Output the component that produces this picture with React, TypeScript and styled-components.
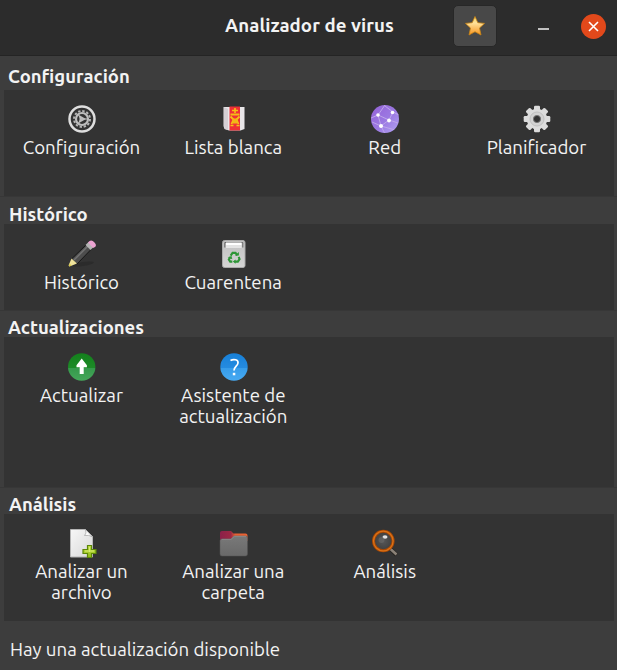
import React from "react";
import styled, { createGlobalStyle } from "styled-components";

const GlobalStyle = createGlobalStyle`
  * { box-sizing: border-box; }
  body { margin: 0; background: #3d3d3d; font-family: "Ubuntu", "Noto Sans", sans-serif; color: #f3f3f3; }
  svg { display: block; overflow: visible; }
`;

const Window = styled.div`
  width: 617px;
  height: 670px;
  display: flex;
  flex-direction: column;
  background: #3d3d3d;
  overflow: hidden;
`;

const TitleBar = styled.header`
  height: 56px;
  flex: none;
  display: flex;
  justify-content: space-between;
  align-items: center;
  padding: 0 11px 3px 225px;
  background: #2c2c2c;
  border-bottom: 1px solid #242424;
`;

const WindowTitle = styled.h1`
  margin: 0;
  font-size: 18.67px;
  line-height: 24px;
  font-weight: 700;
  letter-spacing: 0.08px;
  white-space: nowrap;
`;

const Controls = styled.div`
  display: flex;
  align-items: center;
`;

const StarButton = styled.button`
  width: 44px;
  height: 42px;
  padding: 0;
  display: grid;
  place-items: center;
  border: 1px solid #272727;
  border-radius: 5px;
  background: #484848;
`;

const MinimizeButton = styled.button`
  width: 11px;
  height: 20px;
  margin: 0 32px 0 41px;
  padding: 6px 0 0;
  border: 0;
  background: none;
`;

const CloseButton = styled.button`
  width: 25px;
  height: 25px;
  padding: 0;
  border: 0;
  border-radius: 50%;
  background: #e2491b;
  display: grid;
  place-items: center;
`;

const Group = styled.section<{ $height: number; $ruled: boolean }>`
  height: ${(p) => p.$height}px;
  flex: none;
  display: flex;
  flex-direction: column;
  padding: 0 3px 0 4px;
  border-top: 1px solid ${(p) => (p.$ruled ? "#373737" : "#3d3d3d")};
`;

const GroupTitle = styled.h2<{ $height: number; $bottom: number; $indent: number }>`
  margin: 0;
  height: ${(p) => p.$height}px;
  flex: none;
  padding: 0 0 ${(p) => p.$bottom}px ${(p) => p.$indent}px;
  display: flex;
  align-items: flex-end;
  font-size: 18.5px;
  line-height: 20px;
  font-weight: 700;
`;

const Panel = styled.div<{ $top: number }>`
  flex: 1;
  display: grid;
  grid-template-columns: 152px 151.5px 151.5px 152px;
  align-content: start;
  padding-top: ${(p) => p.$top}px;
  padding-left: 2px;
  background: #333333;
`;

const Item = styled.div`
  display: flex;
  flex-direction: column;
  align-items: center;
`;

const Label = styled.div`
  margin: 4px 1px 0 0;
  display: flex;
  flex-direction: column;
  align-items: center;
`;

const LabelLine = styled.span`
  font-size: 18.67px;
  line-height: 21px;
  white-space: nowrap;
`;

const Status = styled.footer`
  flex: 1;
  padding: 18px 0 0 10px;
  font-size: 18.67px;
  line-height: 22px;
`;

const Settings = () => (
  <svg width="28" height="28" viewBox="0 0 28 28" fill="none" stroke="#dedede">
    <circle cx="14" cy="14" r="12.5" strokeWidth="2.5" />
    <circle cx="14" cy="14" r="8" stroke="#b5b5b5" strokeWidth="2" strokeDasharray="2.4 1.789" />
    <circle cx="14" cy="14" r="6" stroke="#bdbdbd" strokeWidth="2.2" />
    <path d="M12.5 12v4l3.500-2Z" fill="#bdbdbd" stroke="#bdbdbd" strokeWidth="2" />
    <path d="M13 14L10 8.800M13 14l-3 5.200M15 14h6" stroke="#bdbdbd" strokeWidth="1.200" />
  </svg>
);

const Crest = () => (
  <svg width="28" height="28" viewBox="0 0 28 28">
    <path d="M3.500 2h21v22l-4 1.500H9L4.500 24l-1-3Z" fill="#e9e6e9" />
    <path d="M4 2v19l1 3 3 1V4Z" fill="#d5cfd4" />
    <path d="M9.500 1.500h10.500v24H9.500Z" fill="#ef3036" />
    <path d="M12 5.500h6M15 3v5" stroke="#f5c315" strokeWidth="1.600" />
    <path d="M10.500 8.500h9v2h-9Z" fill="#f5bd16" />
    <path d="M10.500 11.500l3 3-2 4.500M19.500 11.500l-3 3 2 4.500" fill="none" stroke="#f5c315" strokeWidth="1.800" />
    <path d="M12.500 13.500h5v5h-5Z" fill="#f3b717" />
    <path d="M10.500 20.500h3m3 0h3" stroke="#f5c315" strokeWidth="1.600" />
  </svg>
);

const Network = () => (
  <svg width="28" height="28" viewBox="0 0 28 28">
    <defs>
      <linearGradient id="net" x1="0" y1="0" x2="1" y2="1">
        <stop stopColor="#9461d7" /><stop offset=".55" stopColor="#9c7ae3" /><stop offset="1" stopColor="#b2a4f2" />
      </linearGradient>
      <clipPath id="netClip"><circle cx="14" cy="14" r="14" /></clipPath>
    </defs>
    <circle cx="14" cy="14" r="14" fill="url(#net)" />
    <g clipPath="url(#netClip)">
      <path d="M0 13l7-3 7-10m-7 10l11 5 4-8 6 3M22 7L14 1M18 15l-8 6-9-4m9 4l4 8m-4-8L7 10m11 5l9 3M10 21l14 4" fill="none" stroke="#bda6ea" strokeWidth="1" />
    </g>
    <g fill="#fff"><circle cx="7" cy="10" r="1.800" /><circle cx="21.500" cy="7.500" r="1.800" /><circle cx="18" cy="15.500" r="1.900" /><circle cx="10" cy="21" r="2" /></g>
  </svg>
);

const Gear = () => (
  <svg width="28" height="28" viewBox="0 0 28 28">
    <g fill="#dcdcdc">
      {[0, 45, 90, 135].map((a) => (
        <rect key={a} x="11" y="0.700" width="6" height="26.600" rx="1.200" transform={`rotate(${a} 14 14)`} />
      ))}
      <circle cx="14" cy="14" r="10.300" />
    </g>
    <circle cx="14" cy="14" r="7" fill="#d2d2d2" stroke="#c0c0c0" strokeWidth="1" />
    <circle cx="14" cy="14" r="3.600" fill="#333" stroke="#777" />
  </svg>
);

const Pencil = () => (
  <svg width="28" height="28" viewBox="0 0 28 28">
    <ellipse cx="15" cy="24" rx="11" ry="2" fill="#2b2b2b" transform="rotate(-8 15 24)" />
    <path d="M3.500 19L18 5l5 4.500L9 24Z" fill="#4d4d4d" stroke="#171717" />
    <path d="M6 20L20 6" stroke="#737373" strokeWidth="1.500" />
    <path d="M17.500 5l3-3 5 5-3 3Z" fill="#b5b5b5" />
    <path d="M20 2.500q3-4 6.500 0t-1.500 5.500Z" fill="#eba3d1" />
    <path d="M3.500 18.500l5.500 5-7.500 3-1-1Z" fill="#eee29b" /><path d="M1.500 23.500l2 2-2.500 1Z" fill="#d9c83d" />
  </svg>
);

const Bin = () => (
  <svg width="28" height="28" viewBox="0 0 28 28">
    <defs><linearGradient id="bin" x1="0" y1="0" x2="0" y2="1"><stop stopColor="#bfbfbf" /><stop offset="1" stopColor="#d5d5d5" /></linearGradient></defs>
    <rect x="2.500" y=".5" width="22.500" height="27" rx="2" fill="url(#bin)" stroke="#aaa" />
    <path d="M4.800 7.500V2.500h18v5" fill="none" stroke="#666" strokeWidth="1" />
    <path d="M6 2.500h15.600v3H6Z" fill="#fff" /><path d="M6 5.500h15.600v2.500H6Z" fill="#e4e4e4" />
    <g fill="none" stroke="#2d9636" strokeWidth="2.500" transform="translate(1.700 2.900) scale(.85)">
      <path d="M10.500 15l2.300-3.200h3.500l2 3" />
      <path d="M20 16.500l1 2.500-2 3h-3.500" />
      <path d="M12.500 22H10l-1.600-2.500L10 17" />
      <path d="M15.500 14.800h4.700v-4Zm.8 4.600v5l-3.200-2.500ZM7 17l4.500-1.700 1 4Z" fill="#2d9636" stroke="none" />
    </g>
  </svg>
);

const Update = () => (
  <svg width="28" height="28" viewBox="0 0 28 28">
    <defs><linearGradient id="up" x1="0" y1="0" x2="0" y2="1"><stop stopColor="#14801c" /><stop offset=".53" stopColor="#1c8b27" /><stop offset=".54" stopColor="#35994b" /><stop offset="1" stopColor="#45a75a" /></linearGradient></defs>
    <circle cx="13.700" cy="14" r="13.700" fill="url(#up)" />
    <path d="M13.700 5.500l5.200 6.700v2h-3.200V21h-4v-6.800H8.500v-2Z" fill="#fff" />
  </svg>
);

const Help = () => (
  <svg width="28" height="28" viewBox="0 0 28 28">
    <defs><linearGradient id="help" x1="0" y1="0" x2="0" y2="1"><stop stopColor="#1780d8" /><stop offset=".53" stopColor="#258be0" /><stop offset=".54" stopColor="#369cea" /><stop offset="1" stopColor="#47aaf2" /></linearGradient></defs>
    <circle cx="14" cy="14" r="13.700" fill="url(#help)" />
    <path d="M10.500 7.500c3-1.800 8-1 7.500 2.500-.3 3-4 3.500-4 7.500" fill="none" stroke="#fff" strokeWidth="1.700" />
    <rect x="12.800" y="19.800" width="2.500" height="2.500" fill="#fff" />
  </svg>
);

const NewFile = () => (
  <svg width="28" height="28" viewBox="0 0 28 28">
    <defs>
      <linearGradient id="page" x1="0" y1="0" x2="1" y2="1"><stop stopColor="#f7f7f7" /><stop offset="1" stopColor="#d8d8d8" /></linearGradient>
      <linearGradient id="plus" x1="0" y1="0" x2="0" y2="1"><stop stopColor="#c3df48" /><stop offset="1" stopColor="#91be17" /></linearGradient>
    </defs>
    <path d="M2.500.5h15l7 7V28h-22Z" fill="url(#page)" stroke="#b5b5b5" />
    <path d="M17.500.5q1.500 4-1 6 4.500-1 8 1.500Z" fill="#fff" stroke="#aaa" strokeWidth=".8" />
    <path d="M19.500 16.500h4v4H28v4h-4.500v4h-4v-4H15v-4h4.500Z" fill="url(#plus)" stroke="#5c8708" strokeWidth="1.200" />
    <path d="M21.500 18v5M17 22h9" stroke="#d9ed77" strokeWidth="1" />
  </svg>
);

const Folder = () => (
  <svg width="28" height="28" viewBox="0 0 28 28">
    <defs>
      <linearGradient id="tab" x1="0" y1="0" x2="1" y2="0"><stop stopColor="#8b204a" /><stop offset=".4" stopColor="#9c2844" /><stop offset=".55" stopColor="#e66035" /><stop offset="1" stopColor="#ec6331" /></linearGradient>
      <linearGradient id="folder" x1="0" y1="0" x2="0" y2="1"><stop stopColor="#797979" /><stop offset="1" stopColor="#696969" /></linearGradient>
    </defs>
    <path d="M0 12V4q0-2 2-2h9l2.500 2.500h12q2 0 2 2V12Z" fill="url(#tab)" />
    <path d="M0 11.500q0-1.500 2-1.500h9l3-3h11.500q2 0 2 2v16q0 2-2 2H2q-2 0-2-2Z" fill="url(#folder)" stroke="#555" strokeWidth=".5" />
    <path d="M1.500 10.300H11L14.200 7.300h12" fill="none" stroke="#999" strokeWidth=".7" />
  </svg>
);

const Search = () => (
  <svg width="28" height="28" viewBox="0 0 28 28">
    <defs><radialGradient id="lens"><stop stopColor="#565656" /><stop offset="1" stopColor="#3e3e3e" /></radialGradient></defs>
    <path d="M19 19.500l6.500 6.500" stroke="#282522" strokeWidth="4" />
    <path d="M19.500 20l6 5.500" stroke="#8b8278" strokeWidth="2.500" />
    <circle cx="12.300" cy="12" r="9.800" fill="url(#lens)" stroke="#a84804" strokeWidth="3" />
    <circle cx="12.300" cy="12" r="9.800" fill="none" stroke="#da7218" strokeWidth="1.300" />
    <ellipse cx="14" cy="8" rx="2.500" ry="1.700" fill="#e4e4e4" /><ellipse cx="10.500" cy="11" rx="3" ry="3" fill="#707070" opacity=".5" />
  </svg>
);

type Entry = { icon: React.FC; lines: string[] };
type GroupData = { title: string; indent: number; height: number; head: number; bottom: number; top: number; items: Entry[] };

const groups: GroupData[] = [
  { title: "Configuración", indent: 4, height: 140, head: 33, bottom: 4, top: 15, items: [
    { icon: Settings, lines: ["Configuración"] },
    { icon: Crest, lines: ["Lista blanca"] },
    { icon: Network, lines: ["Red"] },
    { icon: Gear, lines: ["Planificador"] },
  ] },
  { title: "Histórico", indent: 5, height: 114, head: 27, bottom: 0, top: 16, items: [
    { icon: Pencil, lines: ["Histórico"] },
    { icon: Bin, lines: ["Cuarentena"] },
  ] },
  { title: "Actualizaciones", indent: 4, height: 177, head: 26, bottom: 0, top: 16, items: [
    { icon: Update, lines: ["Actualizar"] },
    { icon: Help, lines: ["Asistente de", "actualización"] },
  ] },
  { title: "Análisis", indent: 5, height: 134, head: 26, bottom: 0, top: 15, items: [
    { icon: NewFile, lines: ["Analizar un", "archivo"] },
    { icon: Folder, lines: ["Analizar una", "carpeta"] },
    { icon: Search, lines: ["Análisis"] },
  ] },
];

export default function App() {
  return (
    <Window>
      <GlobalStyle />
      <TitleBar>
        <WindowTitle>Analizador de virus</WindowTitle>
        <Controls>
          <StarButton aria-label="Favoritos">
            <svg width="20" height="20" viewBox="0 0 20 20">
              <defs><linearGradient id="star" x1="0" y1="0" x2="0" y2="1"><stop stopColor="#f3d35f" /><stop offset=".35" stopColor="#ffe29b" /><stop offset="1" stopColor="#f7931c" /></linearGradient></defs>
              <path d="M10 .5l2.800 6.200 6.700.7-5 4.600 1.500 7L10 15.700 4 19l1.500-7-5-4.600 6.700-.7Z" fill="url(#star)" stroke="#c98413" strokeWidth=".8" strokeLinejoin="round" />
            </svg>
          </StarButton>
          <MinimizeButton aria-label="Minimizar">
            <svg width="11" height="2" viewBox="0 0 11 2"><path d="M0 1h11" stroke="#ddd" strokeWidth="1.700" /></svg>
          </MinimizeButton>
          <CloseButton aria-label="Cerrar">
            <svg width="11" height="11" viewBox="0 0 11 11"><path d="M1 1l9 9M10 1l-9 9" stroke="#fff" strokeWidth="1.600" /></svg>
          </CloseButton>
        </Controls>
      </TitleBar>
      {groups.map((g, i) => (
        <Group key={g.title} $height={g.height} $ruled={i > 0}>
          <GroupTitle $height={g.head} $bottom={g.bottom} $indent={g.indent}>{g.title}</GroupTitle>
          <Panel $top={g.top}>
            {g.items.map(({ icon: Icon, lines }) => (
              <Item key={lines[0]}>
                <Icon />
                <Label>
                  {lines.map((text) => <LabelLine key={text}>{text}</LabelLine>)}
                </Label>
              </Item>
            ))}
          </Panel>
        </Group>
      ))}
      <Status>Hay una actualización disponible</Status>
    </Window>
  );
}
